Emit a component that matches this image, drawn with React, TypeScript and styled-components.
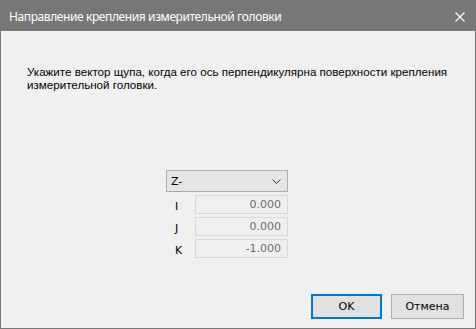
import styled, { createGlobalStyle } from "styled-components";

const GlobalStyle = createGlobalStyle`
    html, body {
        margin: 0;
        padding: 0;
        background: #f0f0f0;
    }
    * {
        box-sizing: border-box;
    }
`;

const StyledWindow = styled.div`
    width: 476px;
    height: 329px;
    display: flex;
    flex-direction: column;
    border: 1px solid #777777;
    background: #f0f0f0;
    font-family: "DejaVu Sans", "Liberation Sans", sans-serif;
    overflow: hidden;
`;

const StyledTitleBar = styled.div`
    height: 30px;
    background: #777777;
    display: flex;
    flex-direction: row;
    align-items: center;
    justify-content: space-between;
    padding: 0 10px 0 8px;
    flex-shrink: 0;
`;

const StyledTitle = styled.span`
    font-family: "Noto Sans", "Open Sans", sans-serif;
    color: #ffffff;
    font-size: 12px;
    letter-spacing: -0.4px;
`;

const StyledClose = styled.svg`
    width: 10px;
    height: 10px;
    margin-top: 1px;
`;

const StyledBody = styled.div`
    flex: 1;
    display: flex;
    flex-direction: column;
    padding: 34px 11px 9px 26px;
`;

const StyledPrompt = styled.p`
    margin: 0;
    font-family: "Liberation Sans", Arial, sans-serif;
    font-size: 11.6px;
    line-height: 13px;
    color: #000000;
    white-space: pre;
`;

const StyledFields = styled.div`
    display: grid;
    grid-template-columns: 29px 93px;
    row-gap: 3px;
    margin: 79px 0 0 139px;
`;

const StyledCombo = styled.div`
    grid-column: 1 / 3;
    height: 22px;
    background: #e5e5e5;
    border: 1px solid #acacac;
    display: flex;
    align-items: center;
    justify-content: space-between;
    padding: 0 6px 0 4px;
    font-size: 11px;
    color: #000000;
`;

const StyledLabel = styled.span`
    font-size: 11px;
    color: #000000;
    display: flex;
    align-items: center;
    padding-left: 9px;
    padding-top: 4px;
`;

const StyledInput = styled.div`
    height: 19px;
    border: 1px solid #d9d9d9;
    background: #f0f0f0;
    display: flex;
    align-items: center;
    justify-content: flex-end;
    padding-right: 6px;
    font-size: 11px;
    color: #6d6d6d;
`;

const StyledButtons = styled.div`
    margin-top: auto;
    display: flex;
    flex-direction: row;
    justify-content: flex-end;
    gap: 9px;
`;

const StyledButton = styled.button<{ primary?: boolean }>`
    width: ${props => props.primary ? "71px" : "73px"};
    height: 25px;
    background: #e1e1e1;
    border: ${props => props.primary ? "2px solid #0078d7" : "1px solid #adadad"};
    font-family: "DejaVu Sans", "Liberation Sans", sans-serif;
    font-size: 11px;
    color: #000000;
    padding: 0;
`;

const vector = [
    { name: "I", value: "0.000" },
    { name: "J", value: "0.000" },
    { name: "K", value: "-1.000" },
];

export default function App() {
    return (
        <>
            <GlobalStyle />
            <StyledWindow>
                <StyledTitleBar>
                    <StyledTitle>Направление крепления измерительной головки</StyledTitle>
                    <StyledClose viewBox="0 0 10 10">
                        <path d="M0.5 0.5 L9.5 9.5 M9.5 0.5 L0.5 9.5" stroke="#ffffff" strokeWidth="1.1" fill="none" />
                    </StyledClose>
                </StyledTitleBar>
                <StyledBody>
                    <StyledPrompt>
                        {"Укажите вектор щупа, когда его ось перпендикулярна поверхности крепления\nизмерительной головки."}
                    </StyledPrompt>
                    <StyledFields>
                        <StyledCombo>
                            <span>Z-</span>
                            <svg width="9" height="5" viewBox="0 0 9 5">
                                <path d="M0.5 0.5 L4.5 4.5 L8.5 0.5" stroke="#333333" strokeWidth="1" fill="none" />
                            </svg>
                        </StyledCombo>
                        {vector.map(v => (
                            <>
                                <StyledLabel key={v.name + "l"}>{v.name}</StyledLabel>
                                <StyledInput key={v.name}>{v.value}</StyledInput>
                            </>
                        ))}
                    </StyledFields>
                    <StyledButtons>
                        <StyledButton primary>OK</StyledButton>
                        <StyledButton>Отмена</StyledButton>
                    </StyledButtons>
                </StyledBody>
            </StyledWindow>
        </>
    );
}
